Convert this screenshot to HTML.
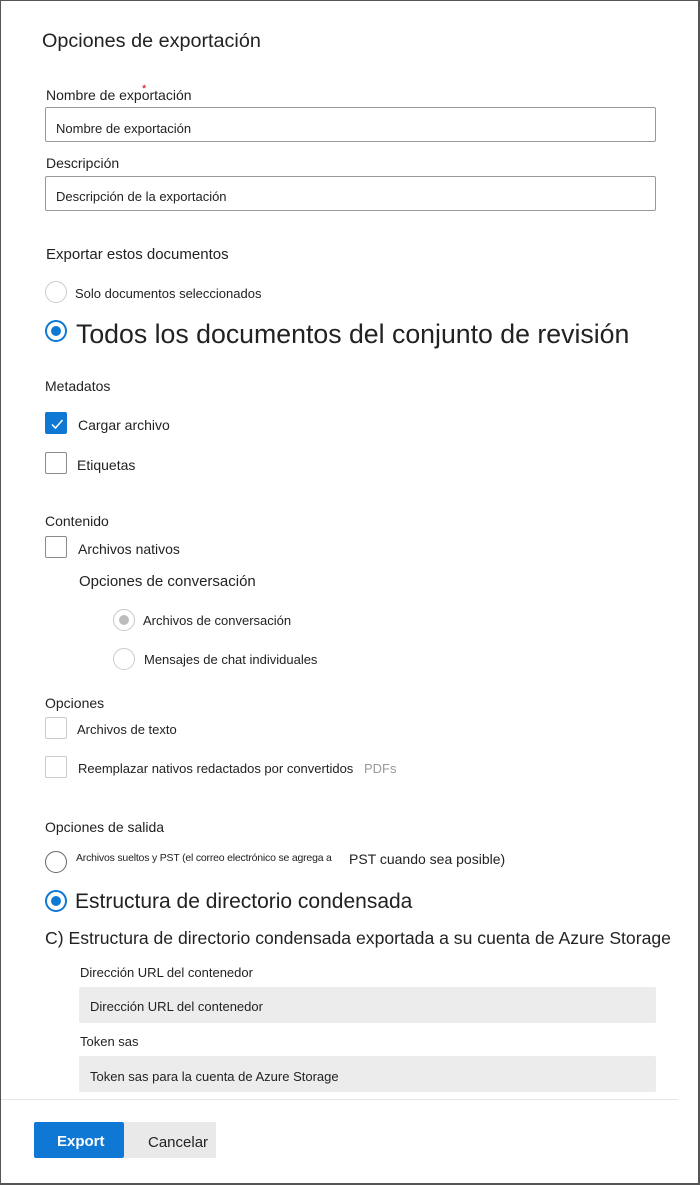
<!DOCTYPE html>
<html><head><meta charset="utf-8"><style>
*{margin:0;padding:0;box-sizing:border-box}
body{width:700px;height:1185px;background:#fff;font-family:"Liberation Sans",sans-serif;color:#222;position:relative;overflow:hidden}
.frame{position:absolute;left:0;top:0;width:700px;height:1185px;border:1px solid #555;border-right-width:2px;border-bottom-width:2px}
.t{position:absolute;white-space:nowrap;line-height:1}
.box{position:absolute;border:1px solid #999;border-radius:2px;background:#fff}
.gbox{position:absolute;background:#ececec;border-radius:2px}
.rad{position:absolute;width:22px;height:22px;border:1px solid #8a8a8a;border-radius:50%;background:#fff}
.rad.on{border:2px solid #0f78d4}
.rad.on::after{content:"";position:absolute;left:4px;top:4px;width:10px;height:10px;border-radius:50%;background:#0f78d4}
.rad.dis{border-color:#c8c8c8}
.rad.dis::after{content:"";position:absolute;left:5px;top:5px;width:10px;height:10px;border-radius:50%;background:#bbb}
.cb{position:absolute;width:22px;height:22px;border:1px solid #8a8a8a;border-radius:2px;background:#fff}
.cb.on{background:#0f78d4;border-color:#0f78d4}
</style></head><body>
<div class="frame"></div>
<div class="t" style="left:42px;top:32px;font-size:19.8px">Opciones de exportación</div>
<div class="t" style="left:46px;top:88px;font-size:14px">Nombre de exportación</div>
<div class="t" style="left:142px;top:84px;font-size:11px;color:#c00">*</div>
<div class="box" style="left:45px;top:107px;width:611px;height:35px"></div>
<div class="t" style="left:56px;top:122px;font-size:13px">Nombre de exportación</div>
<div class="t" style="left:46px;top:156px;font-size:14px">Descripción</div>
<div class="box" style="left:45px;top:176px;width:611px;height:35px"></div>
<div class="t" style="left:56px;top:190px;font-size:13px">Descripción de la exportación</div>

<div class="t" style="left:46px;top:247px;font-size:15px">Exportar estos documentos</div>
<div class="rad" style="left:45px;top:281px;border-color:#ccc"></div>
<div class="t" style="left:75px;top:287px;font-size:13px">Solo documentos seleccionados</div>
<div class="rad on" style="left:45px;top:320px"></div>
<div class="t" style="left:76px;top:321px;font-size:26.7px">Todos los documentos del conjunto de revisión</div>

<div class="t" style="left:45px;top:379px;font-size:14px">Metadatos</div>
<div class="cb on" style="left:45px;top:412px"><svg width="22" height="22" viewBox="0 0 22 22"><path d="M6 11.5l3.5 3.5 7-8" fill="none" stroke="#fff" stroke-width="1.5"/></svg></div>
<div class="t" style="left:78px;top:418px;font-size:14px">Cargar archivo</div>
<div class="cb" style="left:45px;top:452px"></div>
<div class="t" style="left:77px;top:458px;font-size:14px">Etiquetas</div>

<div class="t" style="left:45px;top:514px;font-size:14px">Contenido</div>
<div class="cb" style="left:45px;top:536px"></div>
<div class="t" style="left:78px;top:542px;font-size:14px">Archivos nativos</div>
<div class="t" style="left:79px;top:574px;font-size:15px">Opciones de conversación</div>
<div class="rad dis" style="left:113px;top:609px"></div>
<div class="t" style="left:143px;top:614px;font-size:13px">Archivos de conversación</div>
<div class="rad" style="left:113px;top:648px;border-color:#ccc"></div>
<div class="t" style="left:144px;top:653px;font-size:13px">Mensajes de chat individuales</div>

<div class="t" style="left:45px;top:696px;font-size:14px">Opciones</div>
<div class="cb" style="left:45px;top:717px;border-color:#ccc"></div>
<div class="t" style="left:77px;top:723px;font-size:13px">Archivos de texto</div>
<div class="cb" style="left:45px;top:756px;border-color:#ccc"></div>
<div class="t" style="left:78px;top:762px;font-size:13px">Reemplazar nativos redactados por convertidos</div>
<div class="t" style="left:364px;top:762px;font-size:13px;color:#999">PDFs</div>

<div class="t" style="left:45px;top:820px;font-size:14px">Opciones de salida</div>
<div class="rad" style="left:45px;top:851px;border-color:#666"></div>
<div class="t" style="left:76px;top:853px;font-size:10.5px;letter-spacing:-0.2px">Archivos sueltos y PST (el correo electrónico se agrega a</div>
<div class="t" style="left:349px;top:852px;font-size:14px">PST cuando sea posible)</div>
<div class="rad on" style="left:45px;top:890px"></div>
<div class="t" style="left:75px;top:891px;font-size:21px">Estructura de directorio condensada</div>
<div class="t" style="left:45px;top:930px;font-size:17.6px">C) Estructura de directorio condensada exportada a su cuenta de Azure Storage</div>

<div class="t" style="left:80px;top:966px;font-size:13px">Dirección URL del contenedor</div>
<div class="gbox" style="left:79px;top:987px;width:577px;height:36px"></div>
<div class="t" style="left:90px;top:1000px;font-size:13px">Dirección URL del contenedor</div>
<div class="t" style="left:80px;top:1035px;font-size:13px">Token sas</div>
<div class="gbox" style="left:79px;top:1056px;width:577px;height:36px"></div>
<div class="t" style="left:90px;top:1070px;font-size:13px">Token sas para la cuenta de Azure Storage</div>

<div style="position:absolute;left:1px;top:1099px;width:677px;height:1px;background:#e6e6e6"></div>
<div style="position:absolute;left:34px;top:1122px;width:90px;height:36px;background:#0f78d4;border-radius:2px"></div>
<div class="t" style="left:57px;top:1134px;font-size:15px;color:#fff;font-weight:bold">Export</div>
<div style="position:absolute;left:124px;top:1122px;width:92px;height:36px;background:#e9e9e9"></div>
<div class="t" style="left:148px;top:1135px;font-size:15px">Cancelar</div>
</body></html>
